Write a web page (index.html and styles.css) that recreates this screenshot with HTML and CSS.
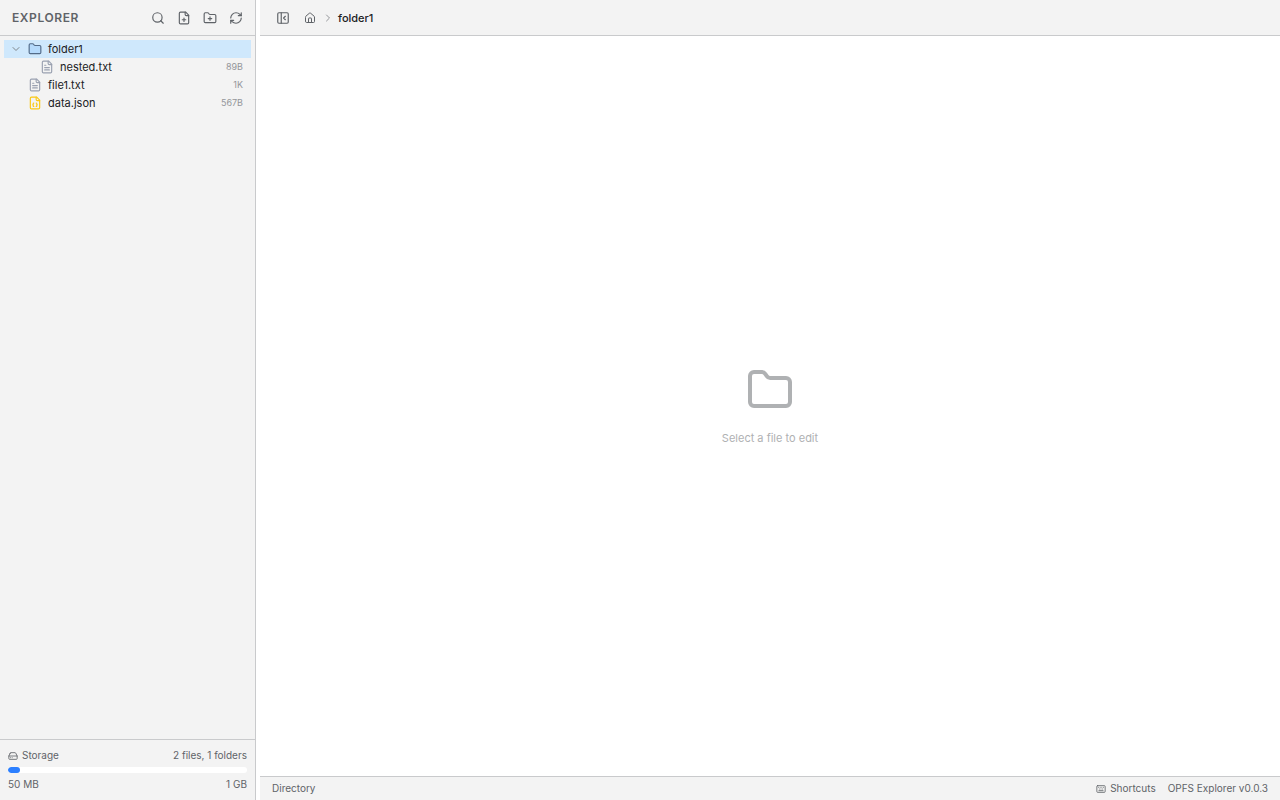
FILE: index.html
```html
<!DOCTYPE html>
<html lang="en">
<head>
<meta charset="utf-8">
<title>OPFS Explorer</title>
<link rel="stylesheet" href="styles.css">
</head>
<body>
<svg class="defs" aria-hidden="true">
  <symbol id="folder" viewBox="0 0 24 24"><path d="M20 20a2 2 0 0 0 2-2V8a2 2 0 0 0-2-2h-7.900a2 2 0 0 1-1.690-.9L9.600 3.900A2 2 0 0 0 7.930 3H4a2 2 0 0 0-2 2v13a2 2 0 0 0 2 2Z"/></symbol>
  <symbol id="file-text" viewBox="0 0 24 24"><path d="M15 2H6a2 2 0 0 0-2 2v16a2 2 0 0 0 2 2h12a2 2 0 0 0 2-2V7Z"/><path d="M14 2v4a2 2 0 0 0 2 2h4M10 9H8M16 13H8M16 17H8"/></symbol>
</svg>
<div class="app">
  <aside class="sidebar">
    <header class="bar sidebar-head">
      <h1 class="title">Explorer</h1>
      <div class="tools">
        <button class="tool" aria-label="Search"><svg class="icon" viewBox="0 0 24 24"><circle cx="11" cy="11" r="8"/><path d="m21 21-4.300-4.300"/></svg></button>
        <button class="tool" aria-label="New file"><svg class="icon" viewBox="0 0 24 24"><path d="M15 2H6a2 2 0 0 0-2 2v16a2 2 0 0 0 2 2h12a2 2 0 0 0 2-2V7Z"/><path d="M14 2v4a2 2 0 0 0 2 2h4M9 15h6M12 18v-6"/></svg></button>
        <button class="tool" aria-label="New folder"><svg class="icon" viewBox="0 0 24 24"><path d="M12 10v6M9 13h6"/><path d="M20 20a2 2 0 0 0 2-2V8a2 2 0 0 0-2-2h-7.900a2 2 0 0 1-1.690-.9L9.600 3.900A2 2 0 0 0 7.930 3H4a2 2 0 0 0-2 2v13a2 2 0 0 0 2 2Z"/></svg></button>
        <button class="tool" aria-label="Refresh"><svg class="icon" viewBox="0 0 24 24"><path d="M3 12a9 9 0 0 1 9-9 9.750 9.750 0 0 1 6.740 2.740L21 8"/><path d="M21 3v5h-5M21 12a9 9 0 0 1-9 9 9.750 9.750 0 0 1-6.740-2.740L3 16"/><path d="M8 16H3v5"/></svg></button>
      </div>
    </header>
    <ul class="tree">
      <li>
        <div class="row selected">
          <svg class="icon chevron" viewBox="0 0 24 24"><path d="m6 9 6 6 6-6"/></svg>
          <svg class="icon folder-icon"><use href="#folder"/></svg>
          <span class="name">folder1</span>
        </div>
        <ul class="branch">
          <li class="row"><svg class="icon file-icon"><use href="#file-text"/></svg><span class="name">nested.txt</span><span class="size">89B</span></li>
        </ul>
      </li>
      <li class="row"><svg class="icon file-icon"><use href="#file-text"/></svg><span class="name">file1.txt</span><span class="size">1K</span></li>
      <li class="row"><svg class="icon file-icon json" viewBox="0 0 24 24"><path d="M15 2H6a2 2 0 0 0-2 2v16a2 2 0 0 0 2 2h12a2 2 0 0 0 2-2V7Z"/><path d="M14 2v4a2 2 0 0 0 2 2h4M10 12a1 1 0 0 0-1 1v1a1 1 0 0 1-1 1 1 1 0 0 1 1 1v1a1 1 0 0 0 1 1M14 18a1 1 0 0 0 1-1v-1a1 1 0 0 1 1-1 1 1 0 0 1-1-1v-1a1 1 0 0 0-1-1"/></svg><span class="name">data.json</span><span class="size">567B</span></li>
    </ul>
    <section class="storage">
      <div class="line">
        <span class="label"><svg class="icon small" viewBox="0 0 24 24"><path d="M22 12H2M5.450 5.110 2 12v6a2 2 0 0 0 2 2h16a2 2 0 0 0 2-2v-6l-3.450-6.890A2 2 0 0 0 16.760 4H7.240a2 2 0 0 0-1.790 1.110zM6 16h.01M10 16h.01"/></svg>Storage</span>
        <span>2 files, 1 folders</span>
      </div>
      <div class="meter"><div class="used" style="width: 5%"></div></div>
      <div class="line"><span>50 MB</span><span>1 GB</span></div>
    </section>
  </aside>
  <main class="main">
    <header class="bar main-head">
      <button class="tool" aria-label="Hide sidebar"><svg class="icon" viewBox="0 0 24 24"><rect width="18" height="18" x="3" y="3" rx="2"/><path d="M9 3v18M16 15l-3-3 3-3"/></svg></button>
      <nav class="crumbs" aria-label="Breadcrumb">
        <a class="home" href="#" aria-label="Home"><svg class="icon mid" viewBox="0 0 24 24"><path d="M15 21v-8a1 1 0 0 0-1-1h-4a1 1 0 0 0-1 1v8"/><path d="M3 10a2 2 0 0 1 .709-1.528l7-5.999a2 2 0 0 1 2.582 0l7 5.999A2 2 0 0 1 21 10v9a2 2 0 0 1-2 2H5a2 2 0 0 1-2-2z"/></svg></a>
        <svg class="icon separator" viewBox="0 0 24 24"><path d="m9 18 6-6-6-6"/></svg>
        <a class="current" href="#" aria-current="page">folder1</a>
      </nav>
    </header>
    <div class="empty">
      <svg class="icon large"><use href="#folder"/></svg>
      <p class="hint">Select a file to edit</p>
    </div>
    <footer class="status">
      <span>Directory</span>
      <div class="status-right">
        <button class="shortcuts"><svg class="icon small" viewBox="0 0 24 24"><rect width="20" height="16" x="2" y="4" rx="2"/><path d="M10 8h.01M12 12h.01M14 8h.01M16 12h.01M18 8h.01M6 8h.01M7 16h10M8 12h.01"/></svg>Shortcuts</button>
        <span>OPFS Explorer v0.0.3</span>
      </div>
    </footer>
  </main>
</div>
</body>
</html>
```

FILE: styles.css
```css
* {
  box-sizing: border-box;
}

body {
  margin: 0;
  background: #fff;
  color: #202124;
  font: 11px/16px Inter, "Liberation Sans", sans-serif;
}

button {
  border: 0;
  padding: 0;
  background: none;
  color: inherit;
  font: inherit;
}

a {
  color: inherit;
  text-decoration: none;
}

ul {
  list-style: none;
  margin: 0;
  padding: 0;
}

.defs {
  display: none;
}

.icon {
  flex: none;
  width: 14px;
  height: 14px;
  fill: none;
  stroke: currentColor;
  stroke-width: 2;
  stroke-linecap: round;
  stroke-linejoin: round;
}

.icon.small {
  width: 10px;
  height: 10px;
}

.icon.mid,
.icon.chevron,
.icon.separator {
  width: 12px;
  height: 12px;
}

.icon.large {
  width: 48px;
  height: 48px;
}

.app {
  display: flex;
  gap: 4px;
  height: 100vh;
}

.sidebar {
  display: flex;
  flex: none;
  flex-direction: column;
  width: 256px;
  background: #f3f3f3;
  border-right: 1px solid #c9cacc;
}

.bar {
  display: flex;
  flex: none;
  align-items: center;
  height: 36px;
  background: #f3f3f3;
  border-bottom: 1px solid #c9cacc;
  color: #5f6368;
}

.sidebar-head {
  justify-content: space-between;
  padding: 0 8px 0 12px;
}

.title {
  margin: 0;
  font-size: 12px;
  font-weight: 600;
  letter-spacing: 0.05em;
  text-transform: uppercase;
}

.tools {
  display: flex;
  gap: 4px;
}

.tool {
  display: flex;
  padding: 4px;
}

.tree {
  flex: 1;
  padding: 4px;
}

.row {
  display: flex;
  align-items: center;
  gap: 6px;
  height: 18px;
  padding: 0 8px 0 6px;
}

.selected {
  background: #cfe8fc;
}

.chevron {
  color: #80868b;
}

.icon.folder-icon {
  color: #536b88;
  fill: #b5dafc;
}

.file-icon {
  margin-left: 18px;
  color: #9aa1b1;
}

.branch {
  padding-left: 12px;
}

.json {
  color: #fac814;
}

.name {
  flex: 1;
}

.size {
  color: #94969a;
  font-size: 9px;
}

.storage {
  padding: 8px;
  border-top: 1px solid #c9cacc;
  color: #5f6368;
  font-size: 10px;
  line-height: 15px;
}

.line {
  display: flex;
  justify-content: space-between;
}

.label {
  display: flex;
  align-items: center;
  gap: 4px;
}

.meter {
  height: 6px;
  margin: 4px 0;
  overflow: hidden;
  background: #fff;
  border-radius: 3px;
}

.used {
  height: 100%;
  background: #2b7fff;
  border-radius: 3px;
}

.main {
  display: flex;
  flex: 1;
  flex-direction: column;
  min-width: 0;
}

.main-head {
  gap: 6px;
  padding: 0 12px;
}

.crumbs {
  display: flex;
  align-items: center;
  gap: 2px;
}

.home {
  display: flex;
  padding: 4px;
}

.separator {
  color: #94969a;
}

.current {
  padding: 0 2px;
  color: #202124;
  font-weight: 500;
}

.empty {
  display: flex;
  flex: 1;
  flex-direction: column;
  align-items: center;
  justify-content: center;
  gap: 16px;
  color: #afb1b3;
}

.hint {
  margin: 0;
}

.status {
  display: flex;
  flex: none;
  align-items: center;
  justify-content: space-between;
  height: 24px;
  padding: 0 12px;
  background: #f3f3f3;
  border-top: 1px solid #c9cacc;
  color: #5f6368;
  font-size: 10px;
  line-height: 15px;
}

.status-right {
  display: flex;
  gap: 12px;
}

.shortcuts {
  display: flex;
  align-items: center;
  gap: 4px;
}
```
